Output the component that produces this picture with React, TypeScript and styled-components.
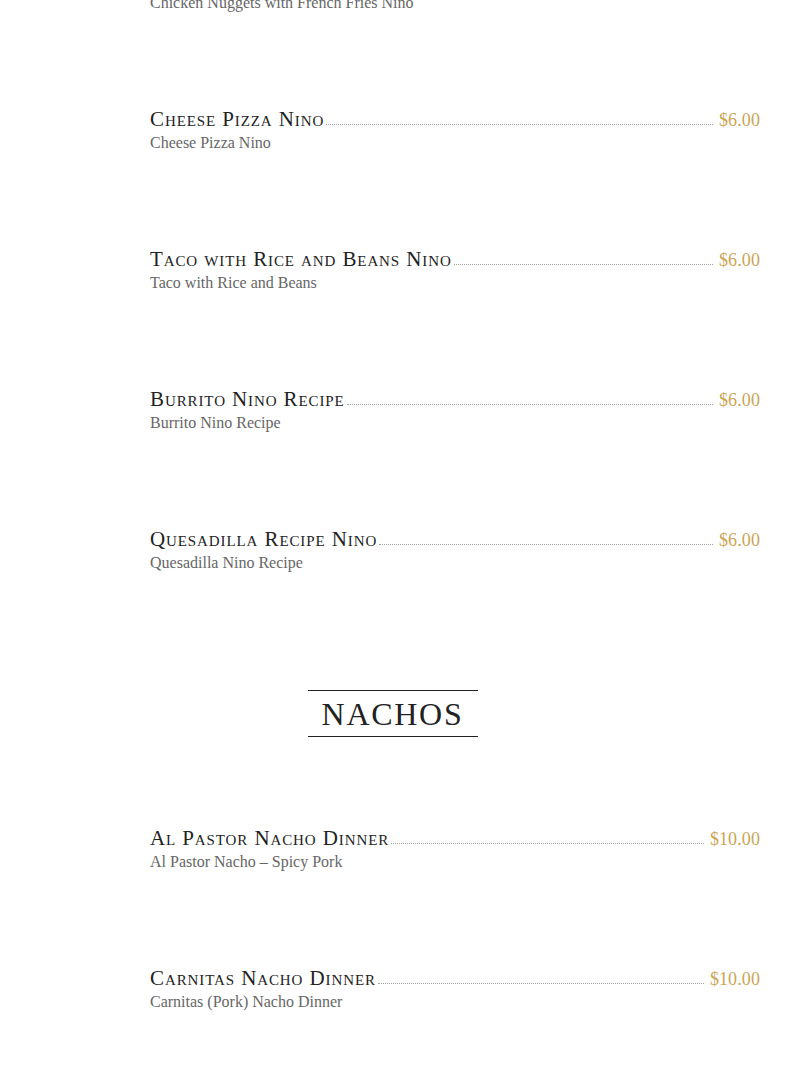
import React from "react";
import styled, { createGlobalStyle } from "styled-components";

const GlobalStyle = createGlobalStyle`
  html, body {
    margin: 0;
    padding: 0;
    background: #ffffff;
  }
`;

const Page = styled.div`
  width: 785px;
  padding: 0 25px 0 150px;
  box-sizing: border-box;
  margin-top: -33px;
`;

const Item = styled.div`
  height: 140px;
  display: flex;
  flex-direction: column;
`;

const TitleRow = styled.div`
  display: flex;
  align-items: baseline;
  height: 24px;
`;

const Title = styled.span`
  font-family: "Liberation Serif", serif;
  font-variant: small-caps;
  font-size: 21px;
  letter-spacing: 0.9px;
  color: #222222;
  white-space: nowrap;
`;

const Leader = styled.span`
  flex: 1;
  border-bottom: 1px dotted #a0a0a0;
  margin: 0 6px 0 2px;
  transform: translateY(-1px);
`;

const Price = styled.span`
  font-family: "Liberation Serif", serif;
  font-size: 18px;
  letter-spacing: 0.1px;
  color: #cba556;
  white-space: nowrap;
`;

const Description = styled.div`
  font-family: "Liberation Serif", serif;
  font-size: 16px;
  color: #666666;
  margin-top: 3px;
`;

const SectionHead = styled.div`
  display: flex;
  justify-content: center;
  margin: 23px 0 0 -150px;
  width: 785px;
  height: 136px;
`;

const SectionTitle = styled.h2`
  margin: 0;
  height: 43px;
  width: 170px;
  padding-top: 2px;
  box-sizing: content-box;
  border-top: 1px solid #222;
  border-bottom: 1px solid #222;
  display: flex;
  align-items: center;
  justify-content: center;
  font-family: "Liberation Serif", serif;
  font-weight: 400;
  font-size: 32px;
  letter-spacing: 1.7px;
  color: #222;
`;

type MenuItem = { name: string; desc: string; price: string };

const kids: MenuItem[] = [
  { name: "Chicken Nuggets with French Fries Nino", desc: "Chicken Nuggets with French Fries Nino", price: "$6.00" },
  { name: "Cheese Pizza Nino", desc: "Cheese Pizza Nino", price: "$6.00" },
  { name: "Taco with Rice and Beans Nino", desc: "Taco with Rice and Beans", price: "$6.00" },
  { name: "Burrito Nino Recipe", desc: "Burrito Nino Recipe", price: "$6.00" },
  { name: "Quesadilla Recipe Nino", desc: "Quesadilla Nino Recipe", price: "$6.00" },
];

const nachos: MenuItem[] = [
  { name: "Al Pastor Nacho Dinner", desc: "Al Pastor Nacho – Spicy Pork", price: "$10.00" },
  { name: "Carnitas Nacho Dinner", desc: "Carnitas (Pork) Nacho Dinner", price: "$10.00" },
];

const Row = ({ item }: { item: MenuItem }) => (
  <Item>
    <TitleRow>
      <Title>{item.name}</Title>
      <Leader />
      <Price>{item.price}</Price>
    </TitleRow>
    <Description>{item.desc}</Description>
  </Item>
);

const App = () => (
  <>
    <GlobalStyle />
    <Page>
      {kids.map((item) => (
        <Row key={item.name} item={item} />
      ))}
      <SectionHead>
        <SectionTitle>NACHOS</SectionTitle>
      </SectionHead>
      {nachos.map((item) => (
        <Row key={item.name} item={item} />
      ))}
    </Page>
  </>
);

export default App;
